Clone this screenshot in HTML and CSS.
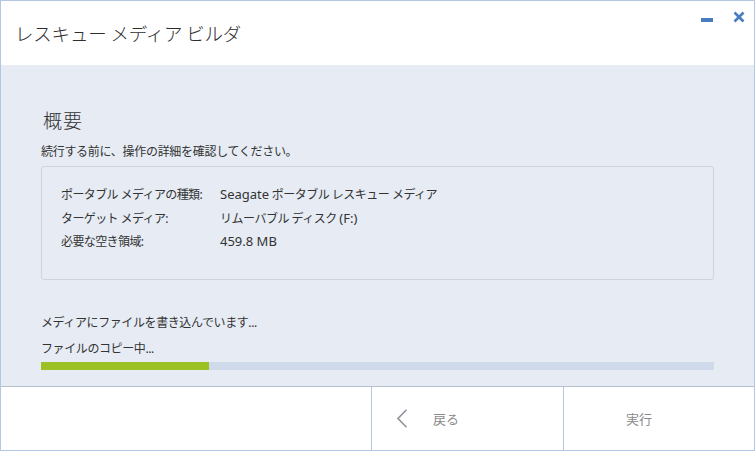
FILE: index.html
```html
<!DOCTYPE html>
<html lang="ja">
<head>
<meta charset="utf-8">
<title>レスキュー メディア ビルダ</title>
<link rel="stylesheet" href="styles.css">
</head>
<body>
<div class="window">
  <header class="titlebar">
    <div class="title">レスキュー メディア ビルダ</div>
    <div class="controls">
      <span class="minimize"></span>
      <svg class="close" width="12" height="12" viewBox="0 0 12 12"><path d="M1.5 1.5 L10.5 10.5 M10.5 1.5 L1.5 10.5" stroke="#4a7cc0" stroke-width="2.6" fill="none"/></svg>
    </div>
  </header>
  <main class="content">
    <h1 class="heading">概要</h1>
    <p class="desc">続行する前に、操作の詳細を確認してください。</p>
    <div class="summary">
      <div class="row"><span class="label">ポータブル メディアの種類:</span><span class="value"><span class="latin">Seagate</span> ポータブル レスキュー メディア</span></div>
      <div class="row"><span class="label">ターゲット メディア:</span><span class="value">リムーバブル ディスク <span class="latin">(F:)</span></span></div>
      <div class="row"><span class="label">必要な空き領域:</span><span class="value"><span class="latin">459.8 MB</span></span></div>
    </div>
    <div class="statusblock">
      <p class="status">メディアにファイルを書き込んでいます...</p>
      <p class="status">ファイルのコピー中...</p>
      <div class="progress"><div class="fill" style="width:168px"></div></div>
    </div>
  </main>
  <footer class="footer">
    <div class="cell"></div>
    <div class="cell btn back">
      <svg class="chev" width="12" height="19" viewBox="0 0 12 19"><path d="M10.5 0.8 L2 9.5 L10.5 18.2" stroke="#8d929b" stroke-width="1.6" fill="none"/></svg>
      <span>戻る</span>
    </div>
    <div class="cell btn run"><span>実行</span></div>
  </footer>
</div>
</body>
</html>
```
FILE: styles.css
```css
* { box-sizing: border-box; }
html, body { margin: 0; padding: 0; }
body {
  font-family: "Noto Sans", "Noto Sans CJK JP", sans-serif;
  color: #333;
  background: #fff;
}
.window {
  width: 755px;
  height: 451px;
  border: 1px solid #b3c6e3;
  display: flex;
  flex-direction: column;
  overflow: hidden;
}
.titlebar {
  height: 64px;
  flex: none;
  background: #fff;
  display: flex;
  justify-content: space-between;
  align-items: flex-start;
}
.title {
  font-family: "Noto Sans CJK JP", sans-serif;
  font-size: 18.5px;
  font-weight: 300;
  line-height: 24px;
  padding: 20px 0 0 14px;
  color: #2e2e2e;
  letter-spacing: -0.2px;
}
.controls {
  display: flex;
  align-items: flex-start;
  gap: 20px;
  padding: 10px 9px 0 0;
}
.minimize {
  display: block;
  width: 12px;
  height: 4px;
  margin-top: 7px;
  background: #4a7cc0;
}
.close { display: block; }
.content {
  flex: 1;
  background: #e6ebf4;
  padding: 42px 40px 0 40px;
  border-bottom: 1px solid #b6c1d1;
}
.heading {
  margin: 0 0 0 2px;
  font-family: "Noto Sans CJK JP", sans-serif;
  font-size: 19px;
  font-weight: 300;
  line-height: 26px;
  letter-spacing: 1px;
  color: #333;
}
.desc {
  margin: 10px 0 5px 0;
  font-size: 12px;
  line-height: 18px;
  letter-spacing: -0.3px;
}
.summary {
  border: 1px solid #cfd3da;
  border-radius: 3px;
  padding: 16px 19px 25px 19px;
  font-size: 12px;
}
.row {
  display: flex;
  line-height: 23.5px;
}
.label {
  width: 159px;
  flex: none;
  letter-spacing: -0.6px;
}
.value { letter-spacing: -0.5px; }
.latin { font-size: 13px; letter-spacing: 0; }
.statusblock { margin-top: 30px; }
.status {
  margin: 0;
  font-size: 12px;
  line-height: 26px;
  letter-spacing: -0.4px;
}
.progress {
  height: 8px;
  background: #cfdaeb;
  display: flex;
}
.fill {
  height: 100%;
  background: #9cc125;
}
.footer {
  height: 63px;
  flex: none;
  background: #fff;
  display: grid;
  grid-template-columns: 370px 192px 191px;
}
.cell { height: 100%; }
.btn {
  border-left: 1px solid #b9c6da;
  display: flex;
  align-items: center;
  font-size: 13px;
  color: #8a8a8a;
}
.back { padding-left: 24px; }
.chev { display: block; margin-right: 25px; }
.run { padding-left: 62px; }
```
